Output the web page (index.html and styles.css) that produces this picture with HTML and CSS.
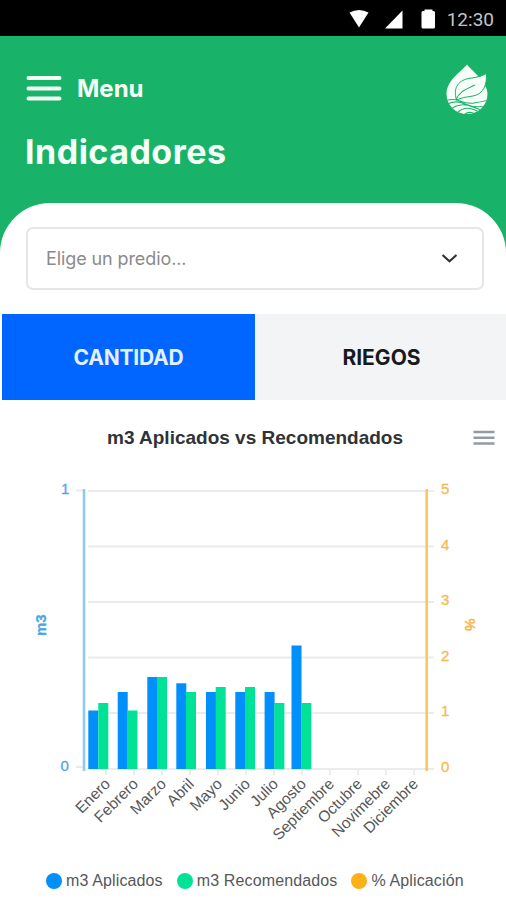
FILE: index.html
```html
<!DOCTYPE html>
<html lang="es">
<head>
    <meta charset="UTF-8">
    <meta name="viewport" content="width=device-width, initial-scale=1.0">
    <title>Indicadores</title>
    <link rel="stylesheet" href="styles.css">
</head>
<body>
    <div class="status-bar">
        <svg class="status-icons" width="90" height="36" viewBox="0 0 90 36">
            <path d="M0.500 12.500Q10 7.500 19.500 12.500L10 27.500Z"/>
            <path d="M36 28.500L53.500 10.500V28.500Z"/>
            <path d="M74 11h1.500V9.500h8V11H84.500q1.500 0 1.500 1.500v14.500q0 1.500-1.500 1.500H74q-1.500 0-1.500-1.500V12.500q0-1.500 1.500-1.500Z"/>
        </svg>
        <span class="clock">12:30</span>
    </div>

    <header class="header">
        <div class="header-top">
            <button class="menu-btn">
                <svg width="36" height="28" viewBox="0 0 36 28">
                    <path d="M2.500 4H33.500M2.500 14.500H33.500M2.500 24.500H33.500"/>
                </svg>
                <span>Menu</span>
            </button>
            <svg class="logo" width="44" height="52" viewBox="0 0 44 52">
                <defs>
                    <clipPath id="drop">
                        <path d="M22 0.500C17 7 1.500 16 1.500 30a20.500 20 0 0 0 41 0C42.500 18 28 8 22 0.500Z"/>
                    </clipPath>
                </defs>
                <g clip-path="url(#drop)">
                    <path class="logo-fill" d="M0 0H44V52H0Z"/>
                    <path class="logo-wave" d="M0 37Q7 34 15 37T29 39T44 36M0 42Q9 35 20 40T44 41M4 47Q14 37 28 43T44 45M11 50Q19 41 30 46T40 49M18 52Q23 46 30 50"/>
                </g>
                <path class="logo-leaf" d="M11 34C8 21 16 15 27 14Q36 13 41.500 9.500C42 20 39 30 28 32Q18 33 11 36Z"/>
                <path class="logo-vein" d="M11 36C14 27 22 25 30 21"/>
            </svg>
        </div>
        <h1>Indicadores</h1>
    </header>

    <main class="sheet">
        <div class="select">
            <span>Elige un predio...</span>
            <svg width="18" height="12" viewBox="0 0 18 12">
                <path d="M2.500 2L9.500 8.300L16.500 2"/>
            </svg>
        </div>

        <div class="tabs">
            <button class="tab active">CANTIDAD</button>
            <button class="tab">RIEGOS</button>
        </div>

        <section class="chart">
            <div class="chart-head">
                <h2>m3 Aplicados vs Recomendados</h2>
                <svg class="chart-menu" width="22" height="18" viewBox="0 0 22 18">
                    <path d="M0.500 3H21.500M0.500 8.800H21.500M0.500 14.500H21.500"/>
                </svg>
            </div>

            <svg class="plot" width="506" height="375" viewBox="0 0 506 375">
                <g class="grid">
                    <path d="M88 16H434M88 71.500H434M88 127H434M88 182.500H434M88 238H434M88 294H434M76 15.500H84M76 292H84"/>
                    <path d="M106 294v6M134 294v6M162 294v6M190 294v6M218 294v6M246 294v6M274 294v6M302 294v6M330 294v6M358 294v6M386 294v6M414 294v6"/>
                </g>
                <g class="bar-applied">
                    <rect x="88.300" y="235.500" width="10" height="58.500"/>
                    <rect x="117.700" y="217" width="10" height="77"/>
                    <rect x="147.300" y="202" width="10" height="92"/>
                    <rect x="176.300" y="208.300" width="10" height="85.700"/>
                    <rect x="206" y="217" width="10" height="77"/>
                    <rect x="235.300" y="217" width="10" height="77"/>
                    <rect x="264.600" y="217" width="10" height="77"/>
                    <rect x="291.500" y="170.500" width="10" height="123.500"/>
                </g>
                <g class="bar-recommended">
                    <rect x="98.300" y="228" width="10" height="66"/>
                    <rect x="127.500" y="235.500" width="10" height="58.500"/>
                    <rect x="157" y="202" width="10" height="92"/>
                    <rect x="186" y="217" width="10" height="77"/>
                    <rect x="215.700" y="212" width="10" height="82"/>
                    <rect x="245" y="212" width="10" height="82"/>
                    <rect x="274.400" y="228" width="10" height="66"/>
                    <rect x="301.300" y="228" width="10" height="66"/>
                </g>
                <path class="axis-left" d="M84 14V296"/>
                <path class="axis-right" d="M426.700 14V296"/>
                <g class="ticks-left">
                    <text x="61" y="19">1</text>
                    <text x="60.500" y="295.500">0</text>
                    <text class="axis-title" transform="translate(46 161) rotate(-90)">m3</text>
                </g>
                <g class="ticks-right">
                    <text x="441" y="19">5</text>
                    <text x="441" y="74.500">4</text>
                    <text x="441" y="130">3</text>
                    <text x="441" y="185.500">2</text>
                    <text x="441" y="241">1</text>
                    <text x="441" y="296.500">0</text>
                    <text class="axis-percent" transform="translate(465 143.500) rotate(90)">%</text>
                </g>
                <g class="months">
                    <text transform="translate(111 310) rotate(-45)">Enero</text>
                    <text transform="translate(139 310) rotate(-45)">Febrero</text>
                    <text transform="translate(167 310) rotate(-45)">Marzo</text>
                    <text transform="translate(195 310) rotate(-45)">Abril</text>
                    <text transform="translate(223 310) rotate(-45)">Mayo</text>
                    <text transform="translate(251 310) rotate(-45)">Junio</text>
                    <text transform="translate(279 310) rotate(-45)">Julio</text>
                    <text transform="translate(307 310) rotate(-45)">Agosto</text>
                    <text transform="translate(335 310) rotate(-45)">Septiembre</text>
                    <text transform="translate(363 310) rotate(-45)">Octubre</text>
                    <text transform="translate(391 310) rotate(-45)">Novimebre</text>
                    <text transform="translate(419 310) rotate(-45)">Diciembre</text>
                </g>
            </svg>

            <div class="legend">
                <span class="legend-item"><i class="dot dot-applied"></i>m3 Aplicados</span>
                <span class="legend-item"><i class="dot dot-recommended"></i>m3 Recomendados</span>
                <span class="legend-item"><i class="dot dot-percent"></i>% Aplicación</span>
            </div>
        </section>
    </main>
</body>
</html>
```
FILE: styles.css
```css
* {
    box-sizing: border-box;
}

body {
    margin: 0;
    width: 506px;
    height: 900px;
    overflow: hidden;
    background: #19b269;
    font-family: Inter, "Liberation Sans", sans-serif;
}

button {
    border: 0;
    padding: 0;
    background: none;
    font-family: inherit;
    cursor: pointer;
}

.status-bar {
    height: 36px;
    padding-right: 12px;
    background: #000;
    display: flex;
    align-items: center;
    justify-content: flex-end;
    gap: 8px;
}

.status-icons {
    fill: #fff;
}

.clock {
    padding-top: 4px;
    font-family: Roboto, sans-serif;
    font-size: 19px;
    line-height: 24px;
    color: #c4c4c4;
}

.header {
    height: 167px;
    padding: 28px 17px 0 26px;
    color: #f4fff6;
}

.header-top {
    display: flex;
    align-items: flex-start;
    justify-content: space-between;
    height: 65px;
}

.menu-btn {
    display: flex;
    align-items: center;
    gap: 15px;
    height: 48px;
    color: inherit;
    font-size: 24px;
    font-weight: 700;
}

.menu-btn path {
    stroke: #f4fff6;
    stroke-width: 4;
    stroke-linecap: round;
}

.logo-fill,
.logo-leaf {
    fill: #f8fff9;
}

.logo-wave,
.logo-vein {
    fill: none;
    stroke: #19b269;
    stroke-width: 1.100;
}

.logo-leaf {
    stroke: #19b269;
    stroke-width: 1;
}

.header h1 {
    margin: 0 0 0 -1px;
    font-size: 34px;
    line-height: 46px;
    font-weight: 700;
    letter-spacing: 0.500px;
}

.sheet {
    height: 697px;
    padding-top: 24px;
    background: #fff;
    border-radius: 50px 50px 0 0;
}

.select {
    display: flex;
    align-items: center;
    justify-content: space-between;
    height: 63px;
    margin: 0 22px 0 26px;
    padding: 0 24px 0 18px;
    border: 2px solid #e6e6e6;
    border-radius: 7px;
    color: #8b8b8b;
    font-size: 18px;
    letter-spacing: -0.100px;
}

.select path {
    fill: none;
    stroke: #333;
    stroke-width: 2.200;
}

.tabs {
    display: flex;
    height: 86px;
    margin: 24px 0 0 2px;
}

.tab {
    flex: 1;
    background: #f3f4f6;
    color: #17191c;
    font-size: 21px;
    font-weight: 700;
    padding-left: 2px;
}

.tab.active {
    flex: 0 0 253px;
    padding-left: 0;
    background: #0066ff;
    color: #e4f0ff;
    letter-spacing: -0.200px;
}

.chart {
    font-family: "Liberation Sans", Arial, sans-serif;
}

.chart-head {
    display: flex;
    align-items: center;
    justify-content: space-between;
    height: 75px;
    padding: 0 11px 0 107px;
}

.chart-head h2 {
    margin: 0;
    font-size: 19px;
    font-weight: 700;
    color: #303336;
}

.chart-menu path {
    stroke: #929ba8;
    stroke-width: 2.400;
}

.plot {
    display: block;
}

.grid {
    stroke: #ebebeb;
    stroke-width: 2;
}

.bar-applied {
    fill: #008ffb;
}

.bar-recommended {
    fill: #00e396;
}

.axis-left {
    stroke: #91c9f6;
    stroke-width: 2.600;
}

.axis-right {
    stroke: #f9c25b;
    stroke-width: 2.400;
}

.ticks-left,
.ticks-right {
    fill: currentColor;
    stroke: currentColor;
    stroke-width: 0.300;
    font-size: 15px;
}

.ticks-left {
    color: #4ba6ee;
}

.ticks-right {
    color: #f6b852;
}

.axis-title {
    font-weight: 700;
}

.axis-percent {
    font-size: 14px;
    font-weight: 700;
}

.months {
    fill: #55585a;
    font-size: 15.500px;
    text-anchor: end;
}

.legend {
    display: flex;
    align-items: center;
    gap: 14px;
    height: 62px;
    padding-left: 46px;
    font-size: 16px;
    letter-spacing: 0.130px;
    color: #55585a;
    white-space: nowrap;
}

.legend-item {
    display: flex;
    align-items: center;
    gap: 4px;
}

.dot {
    width: 16px;
    height: 16px;
    border-radius: 50%;
}

.dot-applied {
    background: #008ffb;
}

.dot-recommended {
    background: #00e396;
}

.dot-percent {
    background: #feb019;
}
```
